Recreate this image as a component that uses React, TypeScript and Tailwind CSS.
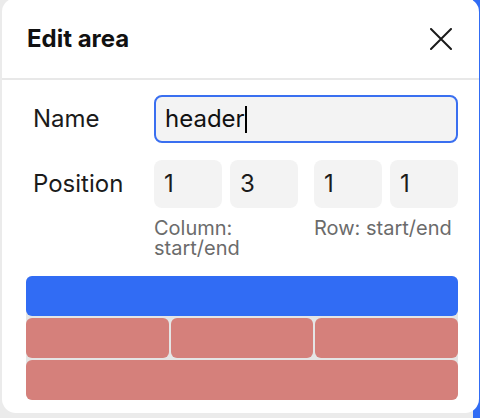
import React from "react";

export default function App() {
  return (
    <div
      className="relative w-[480px] h-[418px] overflow-hidden bg-[#ebebeb]"
      style={{ fontFamily: "Inter, 'Liberation Sans', sans-serif" }}
    >
      <div className="absolute right-0 top-0 bottom-0 w-[7px] bg-[#316cf4]" />
      <div className="absolute left-[2px] top-[-2px] w-[477px] h-[415px] rounded-[14px] bg-white flex flex-col">
        <div className="h-[82px] shrink-0 flex items-center justify-between pl-[25px] pr-[27px] pt-[2px] border-b-2 border-[#e8e8e8]">
          <span className="text-[24px] font-bold text-[#111]">Edit area</span>
          <svg width="22" height="22" viewBox="0 0 22 22" fill="none" stroke="#1a1a1a" strokeWidth="2" strokeLinecap="round">
            <path d="M1 1L21 21M21 1L1 21" />
          </svg>
        </div>
        <div className="flex flex-col pl-[24px] pr-[21px] pt-[15px] text-[#1b1b1b]">
          <div className="grid grid-cols-[128px_1fr] items-center">
            <span className="pl-[7px] text-[24px]">Name</span>
            <div className="h-[48px] rounded-[8px] border-2 border-[#3a6ff0] bg-[#f3f3f3] flex items-center pl-[9px] text-[24px] text-[#111]">
              <span>header</span>
              <span className="inline-block w-[2px] h-[27px] bg-black" />
            </div>
          </div>
          <div className="grid grid-cols-[128px_1fr] items-start mt-[17px]">
            <span className="pl-[7px] text-[24px] h-[48px] flex items-center">Position</span>
            <div className="flex gap-[16px]">
              <div className="flex-1 flex flex-col">
                <div className="flex gap-[8px]">
                  <div className="flex-1 h-[48px] rounded-[8px] bg-[#f3f3f3] flex items-center pl-[10px] text-[24px]">1</div>
                  <div className="flex-1 h-[48px] rounded-[8px] bg-[#f3f3f3] flex items-center pl-[10px] text-[24px]">3</div>
                </div>
                <div className="mt-[10px] text-[20px] leading-[20px] text-[#6b6b6b]">Column: start/end</div>
              </div>
              <div className="flex-1 flex flex-col">
                <div className="flex gap-[8px]">
                  <div className="flex-1 h-[48px] rounded-[8px] bg-[#f3f3f3] flex items-center pl-[10px] text-[24px]">1</div>
                  <div className="flex-1 h-[48px] rounded-[8px] bg-[#f3f3f3] flex items-center pl-[10px] text-[24px]">1</div>
                </div>
                <div className="mt-[10px] text-[20px] leading-[20px] text-[#6b6b6b]">Row: start/end</div>
              </div>
            </div>
          </div>
          <div className="mt-[18px] grid grid-cols-3 grid-rows-[40px_40px_40px] gap-[2px] bg-[#e5e5e5] rounded-[6px]">
            <div className="col-span-3 rounded-[6px] bg-[#316cf4]" />
            <div className="rounded-[6px] bg-[#d5807b]" />
            <div className="rounded-[6px] bg-[#d5807b]" />
            <div className="rounded-[6px] bg-[#d5807b]" />
            <div className="col-span-3 rounded-[6px] bg-[#d5807b]" />
          </div>
        </div>
      </div>
    </div>
  );
}
